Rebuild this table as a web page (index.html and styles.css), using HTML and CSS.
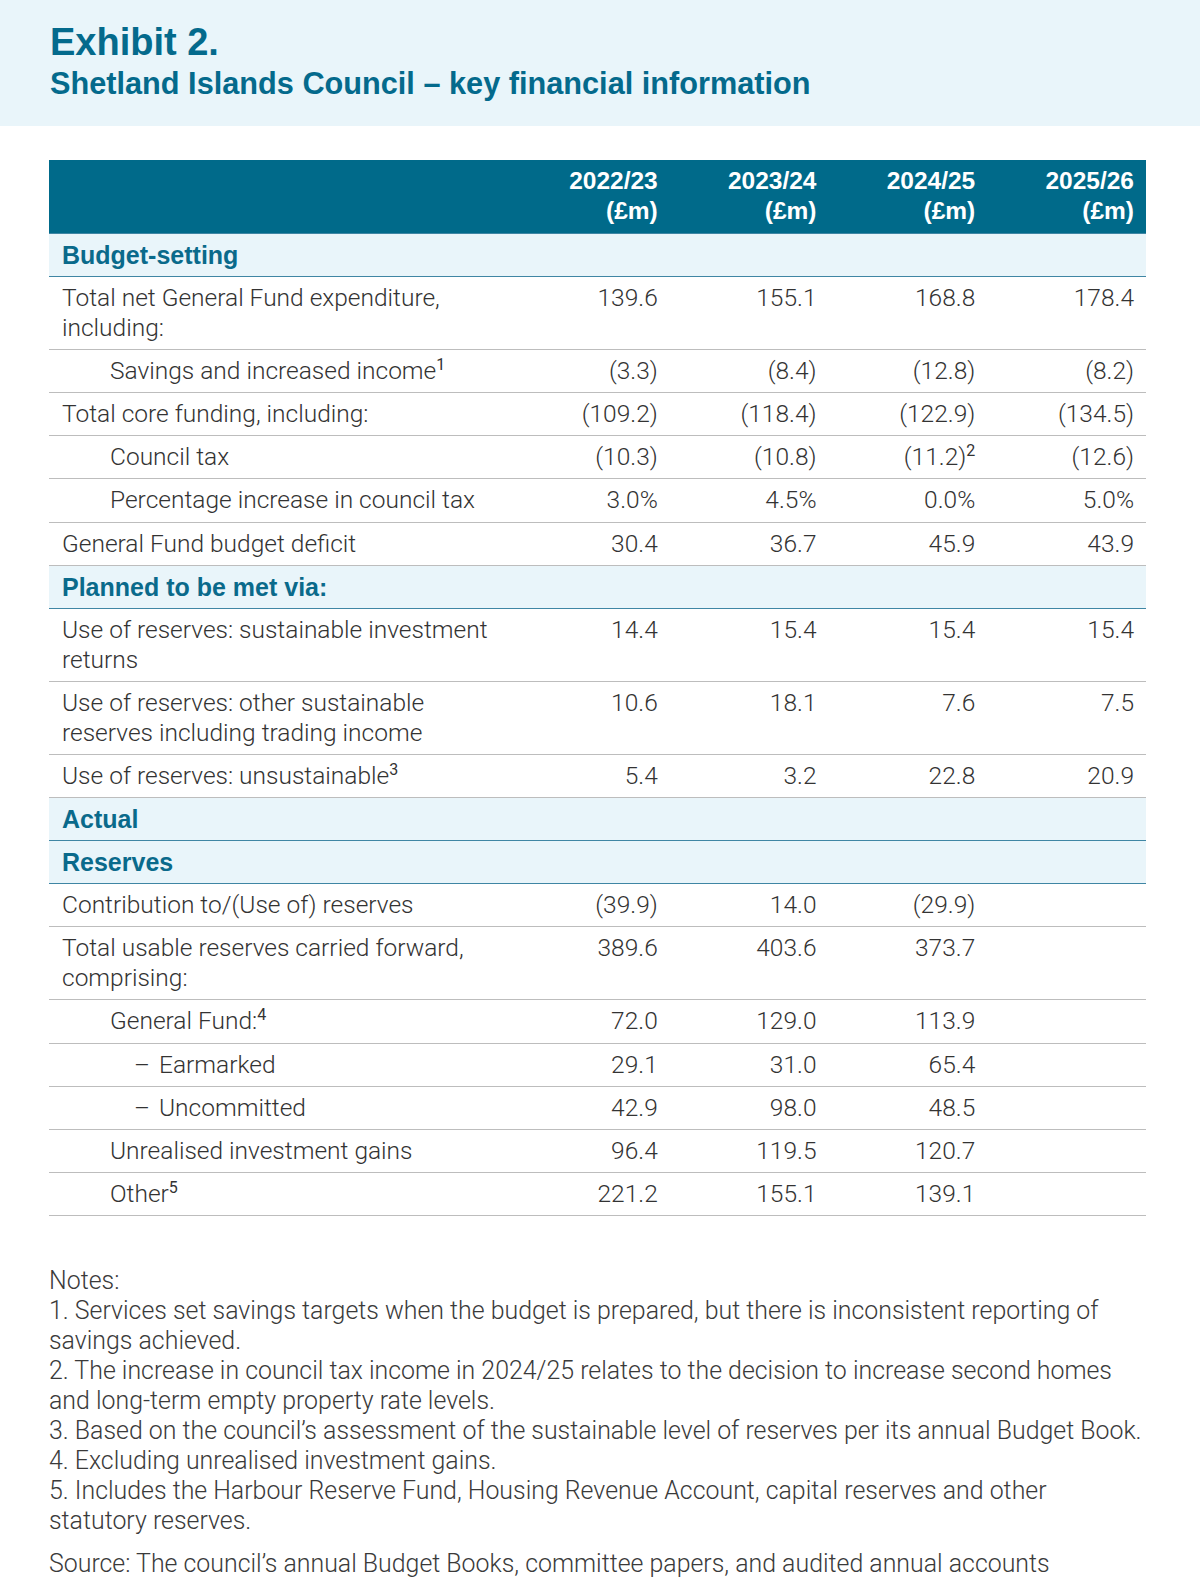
FILE: index.html
```html
<!DOCTYPE html>
<html lang="en">
<head>
<meta charset="utf-8">
<title>Exhibit 2. Shetland Islands Council – key financial information</title>
<link rel="stylesheet" href="styles.css">
</head>
<body>
<header class="banner">
  <h1 class="exhibit">Exhibit 2.</h1>
  <h2 class="subtitle">Shetland Islands Council – key financial information</h2>
</header>
<main class="content">
  <table class="fin">
    <colgroup>
      <col class="c-label"><col class="c-num"><col class="c-num"><col class="c-num"><col class="c-num">
    </colgroup>
    <thead>
      <tr>
        <th></th>
        <th>2022/23<br>(£m)</th>
        <th>2023/24<br>(£m)</th>
        <th>2024/25<br>(£m)</th>
        <th>2025/26<br>(£m)</th>
      </tr>
    </thead>
    <tbody>
      <tr class="section"><td colspan="5">Budget-setting</td></tr>
      <tr><td>Total net General Fund expenditure,<br>including:</td><td>139.6</td><td>155.1</td><td>168.8</td><td>178.4</td></tr>
      <tr><td class="ind1">Savings and increased income<sup>1</sup></td><td>(3.3)</td><td>(8.4)</td><td>(12.8)</td><td>(8.2)</td></tr>
      <tr><td>Total core funding, including:</td><td>(109.2)</td><td>(118.4)</td><td>(122.9)</td><td>(134.5)</td></tr>
      <tr><td class="ind1">Council tax</td><td>(10.3)</td><td>(10.8)</td><td>(11.2)<sup>2</sup></td><td>(12.6)</td></tr>
      <tr><td class="ind1">Percentage increase in council tax</td><td>3.0%</td><td>4.5%</td><td>0.0%</td><td>5.0%</td></tr>
      <tr><td>General Fund budget deficit</td><td>30.4</td><td>36.7</td><td>45.9</td><td>43.9</td></tr>
      <tr class="section"><td colspan="5">Planned to be met via:</td></tr>
      <tr><td>Use of reserves: sustainable investment<br>returns</td><td>14.4</td><td>15.4</td><td>15.4</td><td>15.4</td></tr>
      <tr><td>Use of reserves: other sustainable<br>reserves including trading income</td><td>10.6</td><td>18.1</td><td>7.6</td><td>7.5</td></tr>
      <tr><td>Use of reserves: unsustainable<sup>3</sup></td><td>5.4</td><td>3.2</td><td>22.8</td><td>20.9</td></tr>
      <tr class="section"><td colspan="5">Actual</td></tr>
      <tr class="section"><td colspan="5">Reserves</td></tr>
      <tr><td>Contribution to/(Use of) reserves</td><td>(39.9)</td><td>14.0</td><td>(29.9)</td><td></td></tr>
      <tr><td>Total usable reserves carried forward,<br>comprising:</td><td>389.6</td><td>403.6</td><td>373.7</td><td></td></tr>
      <tr><td class="ind1">General Fund:<sup>4</sup></td><td>72.0</td><td>129.0</td><td>113.9</td><td></td></tr>
      <tr><td class="ind2"><span class="dash">–</span>Earmarked</td><td>29.1</td><td>31.0</td><td>65.4</td><td></td></tr>
      <tr><td class="ind2"><span class="dash">–</span>Uncommitted</td><td>42.9</td><td>98.0</td><td>48.5</td><td></td></tr>
      <tr><td class="ind1">Unrealised investment gains</td><td>96.4</td><td>119.5</td><td>120.7</td><td></td></tr>
      <tr><td class="ind1">Other<sup>5</sup></td><td>221.2</td><td>155.1</td><td>139.1</td><td></td></tr>
    </tbody>
  </table>

  <section class="notes">
    <p class="note">Notes:</p>
    <p class="note">1. Services set savings targets when the budget is prepared, but there is inconsistent reporting of<br>savings achieved.</p>
    <p class="note">2. The increase in council tax income in 2024/25 relates to the decision to increase second homes<br>and long-term empty property rate levels.</p>
    <p class="note">3. Based on the council’s assessment of the sustainable level of reserves per its annual Budget Book.</p>
    <p class="note">4. Excluding unrealised investment gains.</p>
    <p class="note">5. Includes the Harbour Reserve Fund, Housing Revenue Account, capital reserves and other<br>statutory reserves.</p>
    <p class="source">Source: The council’s annual Budget Books, committee papers, and audited annual accounts</p>
  </section>
</main>
</body>
</html>
```

FILE: styles.css
```css
html, body {
  margin: 0;
  padding: 0;
  background: #ffffff;
}

body {
  width: 1200px;
  font-family: Roboto, "Liberation Sans", Arial, sans-serif;
  font-weight: 300;
  color: #333333;
}

.banner {
  height: 126px;
  box-sizing: border-box;
  background: #e9f5fa;
  padding: 20px 50px 0;
}

.exhibit {
  margin: 0;
  font-family: "Liberation Sans", Arial, sans-serif;
  font-weight: 700;
  font-size: 38px;
  line-height: 44px;
  color: #046a8c;
}

.subtitle {
  margin: 2px 0 0;
  font-family: "Liberation Sans", Arial, sans-serif;
  font-weight: 700;
  font-size: 30.7px;
  line-height: 36px;
  color: #046a8c;
}

.content {
  padding: 34px 40px 0 49px;
}

.fin {
  width: 1097px;
  table-layout: fixed;
  border-collapse: collapse;
}

.c-label { width: 462px; }
.c-num { width: 158.75px; }

.fin th {
  background: #006a8a;
  color: #ffffff;
  font-family: "Liberation Sans", Arial, sans-serif;
  font-weight: 700;
  font-size: 24.5px;
  line-height: 30px;
  text-align: right;
  padding: 6px 12px 7px 12px;
  vertical-align: top;
}

.fin td {
  font-size: 24.5px;
  line-height: 30px;
  padding: 6px 12px 6.1px 13px;
  border-bottom: 1px solid #bdbdbd;
  text-align: right;
  vertical-align: top;
  color: #333333;
}

.fin td:first-child {
  text-align: left;
}

.fin td.ind1 { padding-left: 61px; }
.fin td.ind2 { padding-left: 85px; }

.dash {
  display: inline-block;
  width: 25px;
}

.fin sup {
  font-size: 16px;
  font-weight: 400;
  line-height: 0;
  vertical-align: 9px;
}

.fin tr.section td {
  background: #e9f5fa;
  color: #0a6a8b;
  font-family: "Liberation Sans", Arial, sans-serif;
  font-weight: 700;
  font-size: 25px;
  text-align: left;
  border-top: 1px solid #3f86a4;
  border-bottom: 1px solid #3f86a4;
}

.notes {
  margin-top: 50px;
}

.note {
  margin: 0;
  font-size: 24.9px;
  line-height: 30px;
  color: #3a3a3a;
}

.source {
  margin: 13px 0 0;
  font-size: 24.9px;
  line-height: 30px;
  color: #3a3a3a;
}
```
